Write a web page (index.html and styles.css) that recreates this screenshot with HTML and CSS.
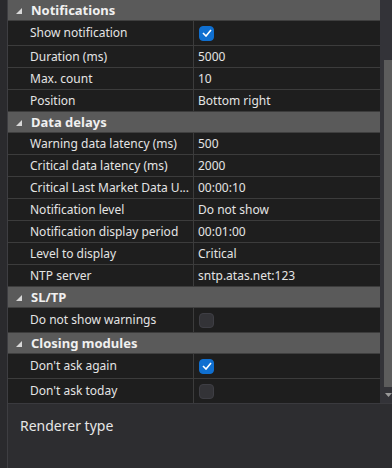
FILE: index.html
```html
<!DOCTYPE html>
<html>
  <head>
    <title>Settings</title>
    <link rel="stylesheet" href="styles.css">
  </head>
  <body>
    <div class="page">
      <div class="gutter"></div>
      <div class="main">
        <div class="top">
          <div class="grid">
            <div class="group"><svg class="arrow" width="6" height="6" viewBox="0 0 6 6"><polygon points="6,0 6,6 0,6"/></svg>Notifications</div>
            <div class="row tall"><div class="name">Show notification</div><div class="value"><span class="check on"><svg width="10" height="8" viewBox="0 0 10 8"><polyline points="1,4 4,7 9,1"/></svg></span></div></div>
            <div class="row"><div class="name">Duration (ms)</div><div class="value">5000</div></div>
            <div class="row"><div class="name">Max. count</div><div class="value">10</div></div>
            <div class="row"><div class="name">Position</div><div class="value">Bottom right</div></div>

            <div class="group"><svg class="arrow" width="6" height="6" viewBox="0 0 6 6"><polygon points="6,0 6,6 0,6"/></svg>Data delays</div>
            <div class="row"><div class="name">Warning data latency (ms)</div><div class="value">500</div></div>
            <div class="row"><div class="name">Critical data latency (ms)</div><div class="value">2000</div></div>
            <div class="row"><div class="name">Critical Last Market Data U...</div><div class="value">00:00:10</div></div>
            <div class="row"><div class="name">Notification level</div><div class="value">Do not show</div></div>
            <div class="row"><div class="name">Notification display period</div><div class="value">00:01:00</div></div>
            <div class="row"><div class="name">Level to display</div><div class="value">Critical</div></div>
            <div class="row"><div class="name">NTP server</div><div class="value">sntp.atas.net:123</div></div>

            <div class="group"><svg class="arrow" width="6" height="6" viewBox="0 0 6 6"><polygon points="6,0 6,6 0,6"/></svg>SL/TP</div>
            <div class="row tall"><div class="name">Do not show warnings</div><div class="value"><span class="check"></span></div></div>

            <div class="group"><svg class="arrow" width="6" height="6" viewBox="0 0 6 6"><polygon points="6,0 6,6 0,6"/></svg>Closing modules</div>
            <div class="row tall"><div class="name">Don't ask again</div><div class="value"><span class="check on"><svg width="10" height="8" viewBox="0 0 10 8"><polyline points="1,4 4,7 9,1"/></svg></span></div></div>
            <div class="row tall"><div class="name">Don't ask today</div><div class="value"><span class="check"></span></div></div>
          </div>
          <div class="scrollbar">
            <div class="thumb"></div>
            <svg class="down" width="7" height="4" viewBox="0 0 7 4"><polygon points="0,0 7,0 3.5,4"/></svg>
          </div>
        </div>
        <div class="details">Renderer type</div>
      </div>
    </div>
  </body>
</html>
```
FILE: styles.css
```css
* {
  box-sizing: border-box;
  margin: 0;
  padding: 0;
}

body {
  width: 392px;
  height: 468px;
  overflow: hidden;
  background: #2d2d30;
  color: #e4e4e4;
  font-family: "Noto Sans", "Open Sans", sans-serif;
  font-size: 12px;
}

.page {
  display: flex;
  height: 468px;
}

.gutter {
  width: 8px;
  background: #2a2a2d;
  border-right: 1px solid #3e3e42;
  flex-shrink: 0;
}

.main {
  flex: 1;
  display: flex;
  flex-direction: column;
}

.top {
  display: flex;
  height: 404px;
  border-bottom: 1px solid #3a3a3e;
  flex-shrink: 0;
}

.grid {
  flex: 1;
  display: flex;
  flex-direction: column;
  background: #1e1e1e;
  overflow: hidden;
}

.group {
  height: 21px;
  flex-shrink: 0;
  display: flex;
  align-items: center;
  background: #5a5a5a;
  border-bottom: 1px solid #3f3f3f;
  font-weight: bold;
  font-size: 13px;
  color: #f0f0f0;
  padding-left: 8px;
}

.arrow {
  fill: #d8d8d8;
  margin-right: 9px;
  margin-top: 1px;
}

.row {
  height: 22px;
  flex-shrink: 0;
  display: flex;
  border-bottom: 1px solid #3c3c3c;
}

.row.tall {
  height: 25px;
}

.name {
  width: 186px;
  flex-shrink: 0;
  padding-left: 22px;
  border-right: 1px solid #3c3c3c;
  line-height: 21px;
  white-space: nowrap;
}

.tall .name {
  line-height: 24px;
}

.value {
  flex: 1;
  padding-left: 4px;
  display: flex;
  align-items: center;
  white-space: nowrap;
}

.check {
  width: 15px;
  height: 15px;
  border-radius: 4px;
  background: #333337;
  border: 1px solid #3e3e44;
  display: flex;
  align-items: center;
  justify-content: center;
  margin-left: 1px;
}

.check.on {
  background: #0f6fd0;
  border-color: #0f6fd0;
}

.check svg polyline {
  fill: none;
  stroke: #ffffff;
  stroke-width: 1.6;
}

.scrollbar {
  width: 12px;
  flex-shrink: 0;
  background: #333338;
  position: relative;
}

.thumb {
  position: absolute;
  left: 4px;
  right: 0;
  top: 60px;
  height: 327px;
  background: #5c5c5c;
}

.down {
  position: absolute;
  left: 5px;
  top: 393px;
  fill: #9a9a9a;
}

.details {
  flex: 1;
  padding: 12px 0 0 12px;
  font-size: 14px;
  color: #e6e6e6;
}
```
